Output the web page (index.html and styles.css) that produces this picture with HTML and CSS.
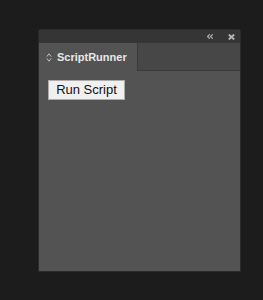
FILE: index.html
```html
<!DOCTYPE html>
<html>
<head>
<meta charset="utf-8">
<link rel="stylesheet" href="styles.css">
</head>
<body>
<div class="panel">
  <div class="titlebar">
    <svg class="ico-collapse" width="6" height="5" viewBox="0 0 6 5"><path d="M2.8 0.3 L0.5 2.5 L2.8 4.7 M5.8 0.3 L3.5 2.5 L5.8 4.7" stroke="#b8b8b8" stroke-width="1.1" fill="none"/></svg>
    <svg class="ico-close" width="7" height="6" viewBox="0 0 7 6"><path d="M0.8 0.6 L6.2 5.4 M6.2 0.6 L0.8 5.4" stroke="#b8b8b8" stroke-width="1.9" fill="none"/></svg>
  </div>
  <div class="tabbar">
    <div class="tab">
      <svg class="ico-grip" width="6" height="9" viewBox="0 0 6 9"><path d="M0.8 3.6 L3 0.8 L5.2 3.6 M0.8 5.4 L3 8.2 L5.2 5.4" stroke="#c0c0c0" stroke-width="1" fill="none"/></svg>
      <span class="tab-label">ScriptRunner</span>
    </div>
    <div class="tab-rest"></div>
  </div>
  <div class="content">
    <button class="run-btn">Run Script</button>
  </div>
</div>
</body>
</html>
```
FILE: styles.css
```css
html, body {
  margin: 0;
  padding: 0;
  background: #1c1c1c;
  width: 263px;
  height: 300px;
  overflow: hidden;
}
.panel {
  margin: 30px 0 0 39px;
  width: 201px;
  height: 241px;
  display: flex;
  flex-direction: column;
  background: #535353;
  box-shadow: 0 0 0 1px #2b2b2b;
  border-radius: 2px 2px 0 0;
}
.titlebar {
  height: 13px;
  background: #353535;
  display: flex;
  align-items: center;
  justify-content: flex-end;
  gap: 15px;
  padding-right: 5px;
  border-radius: 2px 2px 0 0;
}
.tabbar {
  height: 28px;
  display: flex;
  background: #424242;
}
.tab {
  width: 99px;
  background: #535353;
  display: flex;
  align-items: center;
  gap: 5px;
  padding-left: 7px;
  box-sizing: border-box;
  border-right: 1px solid #3a3a3a;
}
.tab-rest {
  flex: 1;
  background: #474747;
  border-bottom: 1px solid #3a3a3a;
}
.tab-label {
  font-family: "Liberation Sans", Arial, sans-serif;
  font-weight: bold;
  font-size: 11px;
  color: #e8e8e8;
}
.ico-grip { display: block; }
.content {
  flex: 1;
  padding: 9px 0 0 9px;
}
.run-btn {
  display: block;
  width: 77px;
  height: 20px;
  padding: 0;
  background: #f0f0f0;
  border: 1px solid #adadad;
  border-radius: 0;
  font-family: "Liberation Sans", Arial, sans-serif;
  font-size: 13px;
  color: #111;
  line-height: 18px;
}
```
